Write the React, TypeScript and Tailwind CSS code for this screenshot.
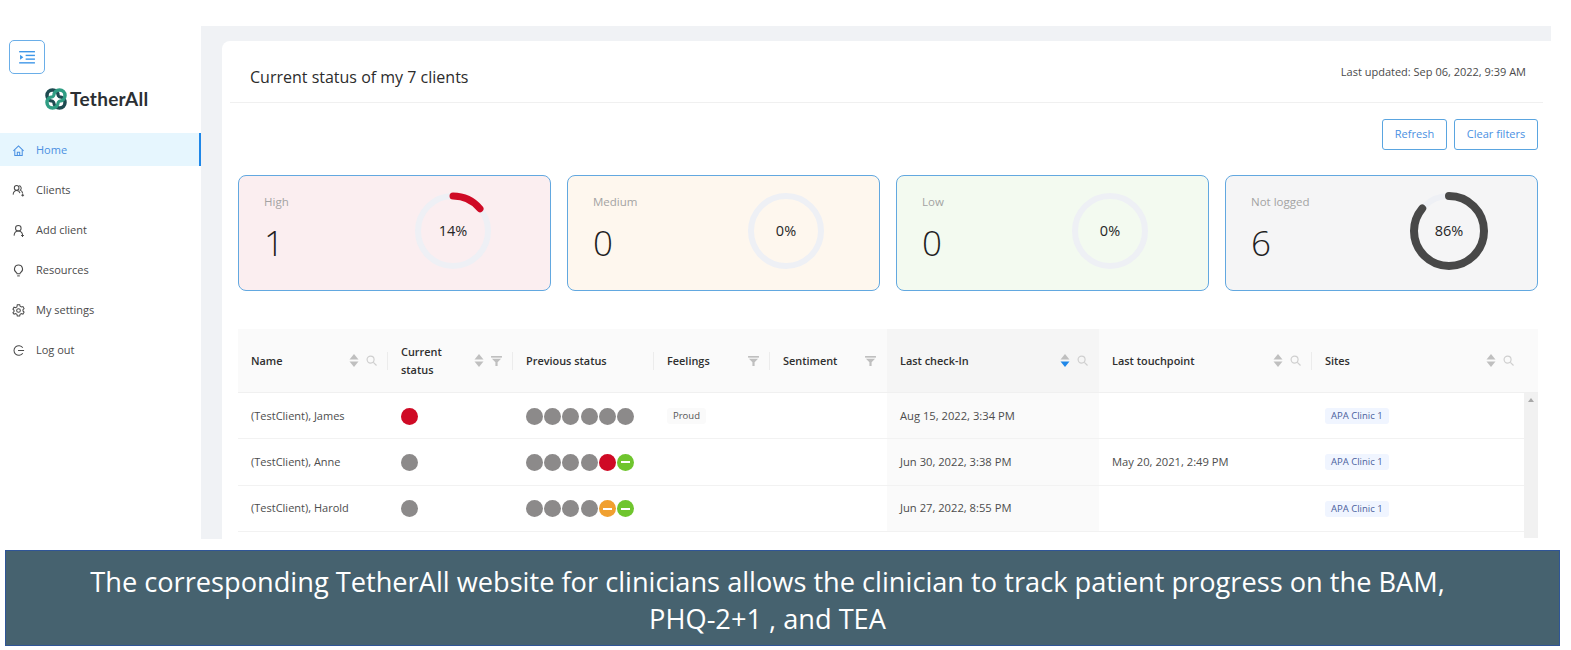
const uiFont = "font-['Open_Sans',sans-serif]";

const navItems = [
  { label: "Home", icon: "home", active: true },
  { label: "Clients", icon: "clients" },
  { label: "Add client", icon: "add" },
  { label: "Resources", icon: "bulb" },
  { label: "My settings", icon: "gear" },
  { label: "Log out", icon: "logout" },
];

function NavIcon({ name }: { name: string }) {
  const paths: Record<string, React.ReactNode> = {
    home: (
      <>
        <path d="M1.500 7.500 7 2l5.500 5.500" />
        <path d="M3 6.500V12.500H11V6.500" />
        <path d="M5.700 12.500V9h2.600v3.500" />
      </>
    ),
    clients: (
      <>
        <circle cx="5" cy="4.200" r="2.500" />
        <path d="M1.200 11.500c.3-2.800 1.800-4.500 3.800-4.500 1.700 0 3 1 3.600 2.800" />
        <path d="M7.500 2a2.500 2.500 0 0 1 1.300 4.600c1.400.5 2.400 1.800 2.700 3.400" />
        <path d="M10 12h3M11.500 10.500v3" />
      </>
    ),
    add: (
      <>
        <circle cx="6.800" cy="4.500" r="3" />
        <path d="M2.200 12.500c.3-3 2-5 4.600-5 2.300 0 3.900 1.400 4.500 3.600" />
        <path d="M9.800 12.400h3M11.300 10.900v3" />
      </>
    ),
    bulb: (
      <>
        <path d="M7 1.200a4.300 4.300 0 0 0-2.400 7.900c.5.400.8.900.8 1.500h3.200c0-.6.300-1.100.8-1.500A4.300 4.300 0 0 0 7 1.200Z" />
        <path d="M5.600 12.800h2.800" />
      </>
    ),
    gear: (
      <>
        <path d="M5.700 1.500h2.600l.4 1.600 1.500.8 1.600-.5 1.200 2.200-1.200 1.200v1.400l1.200 1.200-1.200 2.200-1.600-.5-1.500.8-.4 1.600H5.700l-.4-1.600-1.500-.8-1.600.5L1 10.100l1.200-1.200V7.500L1 6.300l1.200-2.200 1.600.5 1.500-.8Z" transform="translate(0 -.7)" />
        <circle cx="7" cy="7" r="2" />
      </>
    ),
    logout: (
      <>
        <path d="M11.600 4A5.200 5.200 0 1 0 11.600 10" />
        <path d="M6.500 7h6.500" />
      </>
    ),
  };
  return (
    <svg viewBox="0 0 14 14" className="h-[13px] w-[13px]" fill="none" stroke="currentColor" strokeWidth="1.100">
      {paths[name]}
    </svg>
  );
}

function Logo() {
  return (
    <svg viewBox="0 0 22 22" className="h-[22px] w-[22px]" fill="none">
      <circle cx="7.500" cy="7.500" r="5.500" stroke="#1d4a50" strokeWidth="3.500" />
      <circle cx="14.500" cy="14.500" r="5.500" stroke="#1d4a50" strokeWidth="3.500" />
      <circle cx="14.500" cy="7.500" r="5.500" stroke="#2f9d83" strokeWidth="3.500" />
      <circle cx="7.500" cy="14.500" r="5.500" stroke="#2f9d83" strokeWidth="3.500" />
      <path d="M11 5c.5 4 1.900 5.500 6 6-4.100.5-5.500 2-6 6-.5-4-1.900-5.500-6-6 4.100-.5 5.500-2 6-6Z" fill="#fff" />
    </svg>
  );
}

function Sidebar() {
  return (
    <aside className="flex w-[201px] shrink-0 flex-col pt-[14px]">
      <button className="ml-[9px] flex h-[34px] w-[36px] items-center justify-center rounded-[5px] border border-[#6aaee8] bg-white">
        <svg viewBox="0 0 18 14" className="h-[13px] w-[17px]" fill="#3f97e8">
          <rect x="0" y="0" width="17" height="1.500" />
          <rect x="7" y="4" width="10" height="1.500" />
          <rect x="7" y="8" width="10" height="1.500" />
          <rect x="0" y="12" width="17" height="1.500" />
          <path d="M1 4l3.500 2.700L1 9.400Z" />
        </svg>
      </button>
      <div className="mt-[14px] ml-[45px] flex items-center gap-[3px]">
        <Logo />
        <span className="font-['Lato',sans-serif] text-[19px] leading-[22px] font-bold tracking-[0.3px] text-[#2b2f33]">TetherAll</span>
      </div>
      <nav className="mt-[23px] flex flex-col gap-[7px]">
        {navItems.map((item) => (
          <div
            key={item.label}
            className={
              item.active
                ? "flex h-[33px] items-center gap-[11px] border-r-[2px] border-[#1f87e8] bg-[#e6f6fe] pt-[1px] pl-[12px] text-[#4a90e2]"
                : "flex h-[33px] items-center gap-[11px] pt-[1px] pl-[12px] text-[#4a4a4a]"
            }
          >
            <NavIcon name={item.icon} />
            <span className={`${uiFont} text-[11px]`}>{item.label}</span>
          </div>
        ))}
      </nav>
    </aside>
  );
}

function Donut({ pct, color, stroke }: { pct: number; color: string; stroke: number }) {
  const r = 35;
  const c = 2 * Math.PI * r;
  return (
    <div className="relative h-[76px] w-[76px]">
      <svg viewBox="0 0 76 76" className="h-[76px] w-[76px] -rotate-90 overflow-visible">
        <circle cx="38" cy="38" r={r} fill="none" stroke="#eef0f5" strokeWidth="6" />
        {pct > 0 && (
          <circle
            cx="38"
            cy="38"
            r={r}
            fill="none"
            stroke={color}
            strokeWidth={stroke}
            strokeLinecap="round"
            strokeDasharray={`${(pct / 100) * c} ${c}`}
          />
        )}
      </svg>
      <span className={`${uiFont} absolute inset-0 flex items-center justify-center text-[14.500px] text-[#262626]`}>{pct}%</span>
    </div>
  );
}

const cards = [
  { label: "High", value: 1, pct: 14, color: "#cf0a25", stroke: 7, bg: "bg-[#fbeef0]", pad: "pr-[59px]" },
  { label: "Medium", value: 0, pct: 0, color: "#eef0f5", stroke: 6, bg: "bg-[#fef7ee]", pad: "pr-[55px]" },
  { label: "Low", value: 0, pct: 0, color: "#eef0f5", stroke: 6, bg: "bg-[#f3faf0]", pad: "pr-[60px]" },
  { label: "Not logged", value: 6, pct: 86, color: "#484848", stroke: 8, bg: "bg-[#f5f5f6]", pad: "pr-[50px]" },
];

function SortArrows({ active }: { active?: boolean }) {
  return (
    <svg viewBox="0 0 10 13" className="h-[13px] w-[10px]">
      <path d="M5 0 9.500 5.500H.5Z" fill="#bfbfbf" />
      <path d="M5 13 9.500 7.500H.5Z" fill={active ? "#1f87e8" : "#bfbfbf"} />
    </svg>
  );
}

function SearchMark() {
  return (
    <svg viewBox="0 0 12 12" className="h-[11px] w-[11px]" fill="none" stroke="#cfcfcf" strokeWidth="1.300">
      <circle cx="5" cy="5" r="3.800" />
      <path d="M8 8l3.500 3.500" />
    </svg>
  );
}

function FilterMark() {
  return (
    <svg viewBox="0 0 12 11" className="h-[10px] w-[11px]" fill="#bfbfbf">
      <path d="M0 0h12v1.800H0Z" />
      <path d="M1 3h10L7.200 7v4H4.800V7Z" />
    </svg>
  );
}

const columns = [
  { title: "Name", arrows: true, tool: "search", width: "w-[150px]" },
  { title: "Current status", arrows: true, tool: "filter", width: "w-[125px]" },
  { title: "Previous status", width: "w-[141px]" },
  { title: "Feelings", tool: "filter", width: "w-[116px]" },
  { title: "Sentiment", tool: "filter", width: "w-[117px]" },
  { title: "Last check-In", arrows: true, tool: "search", width: "w-[212px]", sorted: true },
  { title: "Last touchpoint", arrows: true, tool: "search", width: "w-[213px]" },
  { title: "Sites", arrows: true, tool: "search", width: "w-[226px] pr-[24px]" },
];

const G = "g";
const rows = [
  { name: "(TestClient), James", current: "r", prev: [G, G, G, G, G, G], feeling: "Proud", check: "Aug 15, 2022, 3:34 PM", touch: "" },
  { name: "(TestClient), Anne", current: G, prev: [G, G, G, G, "r", "l"], feeling: "", check: "Jun 30, 2022, 3:38 PM", touch: "May 20, 2021, 2:49 PM" },
  { name: "(TestClient), Harold", current: G, prev: [G, G, G, G, "o", "l"], feeling: "", check: "Jun 27, 2022, 8:55 PM", touch: "" },
];

function Dot({ kind }: { kind: string }) {
  const color = kind === "r" ? "bg-[#cf0a25]" : kind === "o" ? "bg-[#f0a030]" : kind === "l" ? "bg-[#6fc52e]" : "bg-[#8c8a8a]";
  return (
    <span className={`flex h-[17px] w-[17px] items-center justify-center rounded-full ${color}`}>
      {(kind === "o" || kind === "l") && <span className="h-[2px] w-[9px] bg-white" />}
    </span>
  );
}

function StatusTable() {
  return (
    <div className={`${uiFont} relative mt-[38px] ml-[16px] h-[209px] w-[1300px] overflow-hidden`}>
      <div className="flex h-[64px] border-b border-[#f0f0f0] bg-[#fafafa]">
        {columns.map((col, i) => (
          <div
            key={col.title}
            className={`relative flex items-center pr-[11px] pl-[13px] ${col.width} ${col.sorted ? "bg-[#f5f5f5]" : ""}`}
          >
            <span className={`${i === 1 ? "pr-[24px]" : ""} flex-1 text-[10.900px] leading-[18px] font-semibold text-[#2f2f2f]`}>{col.title}</span>
            <div className="flex items-center gap-[7px]">
              {col.arrows && <SortArrows active={col.sorted} />}
              {col.tool === "search" && <SearchMark />}
              {col.tool === "filter" && <FilterMark />}
            </div>
            {i > 0 && i !== 5 && i !== 6 && <span className="absolute top-[23px] -left-px h-[18px] w-px bg-[#ececec]" />}
          </div>
        ))}
      </div>
      {rows.map((row) => (
        <div key={row.name} className="flex h-[46.300px] border-b border-[#f2f2f2] text-[11.200px] text-[#4d4d4d]">
          <div className="flex w-[150px] items-center pt-[1px] pl-[13px] text-[11px]">{row.name}</div>
          <div className="flex w-[125px] items-center pt-[1px] pl-[13px]">
            <Dot kind={row.current} />
          </div>
          <div className="flex w-[141px] items-center gap-[1.200px] pt-[1px] pl-[13px]">
            {row.prev.map((kind, i) => (
              <Dot key={i} kind={kind} />
            ))}
          </div>
          <div className="flex w-[116px] items-center pt-[1px] pl-[13px]">
            {row.feeling && <span className="rounded-[3px] bg-[#fafafa] px-[6px] py-[1px] text-[9.500px] leading-[14px] text-[#555]">{row.feeling}</span>}
          </div>
          <div className="w-[117px]" />
          <div className="flex w-[212px] items-center bg-[#fafafa] pt-[1px] pl-[13px]">{row.check}</div>
          <div className="flex w-[213px] items-center pt-[1px] pl-[13px]">{row.touch}</div>
          <div className="flex w-[226px] items-center pt-[1px] pl-[13px]">
            <span className="rounded-[3px] bg-[#f0f5ff] px-[6px] py-[1px] text-[9.500px] leading-[14px] text-[#4a5f9d]">APA Clinic 1</span>
          </div>
        </div>
      ))}
      <div className="absolute top-[64px] right-0 bottom-0 flex w-[14px] justify-center bg-[#f1f1f1] pt-[5px]">
        <span className="h-0 w-0 border-x-[3px] border-b-[4px] border-x-transparent border-b-[#a8a8a8]" />
      </div>
    </div>
  );
}

export default function App() {
  return (
    <div className="flex h-[650px] w-[1571px] flex-col overflow-hidden bg-white pt-[26px]">
      <div className="flex h-[513px] shrink-0">
        <Sidebar />
        <main className="mr-[20px] flex flex-1 flex-col bg-[#f0f2f5] pt-[15px] pl-[21px]">
          <div className="flex flex-1 flex-col rounded-tl-[8px] bg-white">
            <header className={`${uiFont} mx-[8px] flex h-[62px] items-start justify-between border-b border-[#f0f0f0] pr-[17px] pl-[20px]`}>
              <h1 className="mt-[25px] text-[16px] leading-[22px] font-medium text-[#2c2c2c]">Current status of my 7 clients</h1>
              <span className="mt-[23px] text-[11px] leading-[16px] text-[#4a4a4a]">Last updated: Sep 06, 2022, 9:39 AM</span>
            </header>
            <div className={`${uiFont} mt-[16px] mr-[13px] flex justify-end gap-[7px]`}>
              <button className="h-[31px] w-[65px] rounded-[3px] border border-[#5aa5e0] text-[11px] text-[#4a90e2]">Refresh</button>
              <button className="h-[31px] w-[84px] rounded-[3px] border border-[#5aa5e0] text-[11px] text-[#4a90e2]">Clear filters</button>
            </div>
            <div className="mt-[25px] ml-[16px] flex w-[1300px] gap-[16px]">
              {cards.map((card) => (
                <div
                  key={card.label}
                  className={`flex h-[116px] w-[313px] shrink-0 items-center justify-between rounded-[8px] border border-[#62a8e0] pl-[25px] ${card.bg} ${card.pad}`}
                >
                  <div className={`${uiFont} -mt-[8px] flex flex-col`}>
                    <span className="text-[11.500px] leading-[16px] text-[#a3a3a3]">{card.label}</span>
                    <span className="mt-[11px] text-[35px] leading-[44px] font-light text-[#1f1f1f]">{card.value}</span>
                  </div>
                  <div className="-mt-[5px]">
                    <Donut pct={card.pct} color={card.color} stroke={card.stroke} />
                  </div>
                </div>
              ))}
            </div>
            <StatusTable />
          </div>
        </main>
      </div>
      <section className="mt-[11px] ml-[5px] flex h-[96px] w-[1555px] flex-col items-center justify-center border border-[#2f5597] bg-[#46626f] pt-[3px] pr-[30px] text-center font-['Open_Sans',sans-serif] text-[27.200px] leading-[37px] text-white">
        <p className="whitespace-nowrap">The corresponding TetherAll website for clinicians allows the clinician to track patient progress on the BAM,</p>
        <p>PHQ-2+1 , and TEA</p>
      </section>
    </div>
  );
}
